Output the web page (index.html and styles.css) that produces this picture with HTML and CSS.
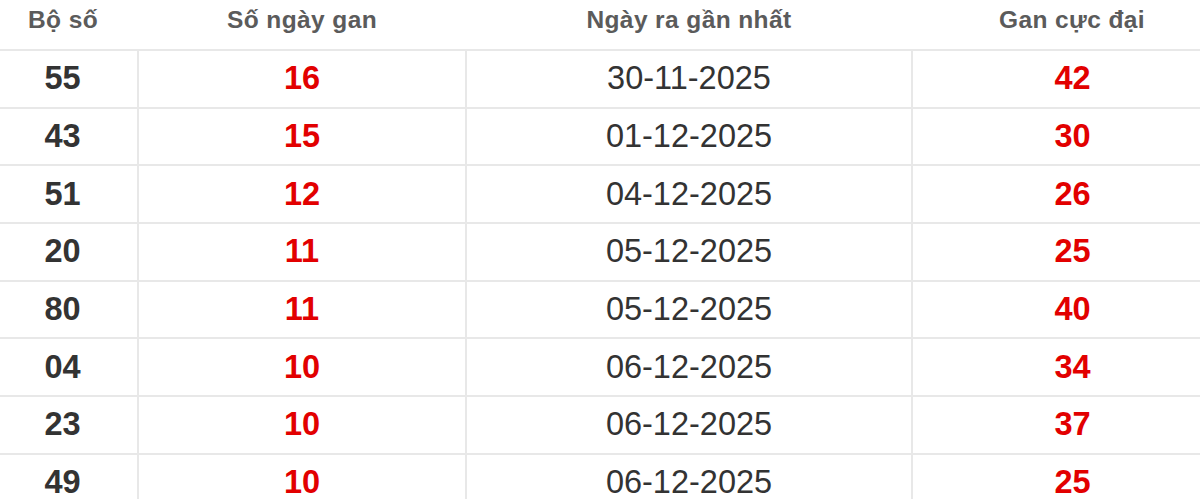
FILE: index.html
```html
<!DOCTYPE html>
<html lang="vi">
<head>
<meta charset="utf-8">
<link rel="stylesheet" href="styles.css">
</head>
<body>
<div class="wrap">
<table class="gan">
  <colgroup>
    <col class="c1"><col class="c2"><col class="c3"><col class="c4">
  </colgroup>
  <thead>
    <tr><th>Bộ số</th><th>Số ngày gan</th><th>Ngày ra gần nhất</th><th>Gan cực đại</th></tr>
  </thead>
  <tbody>
    <tr><td class="num">55</td><td class="red">16</td><td class="date">30-11-2025</td><td class="red">42</td></tr>
    <tr><td class="num">43</td><td class="red">15</td><td class="date">01-12-2025</td><td class="red">30</td></tr>
    <tr><td class="num">51</td><td class="red">12</td><td class="date">04-12-2025</td><td class="red">26</td></tr>
    <tr><td class="num">20</td><td class="red">11</td><td class="date">05-12-2025</td><td class="red">25</td></tr>
    <tr><td class="num">80</td><td class="red">11</td><td class="date">05-12-2025</td><td class="red">40</td></tr>
    <tr><td class="num">04</td><td class="red">10</td><td class="date">06-12-2025</td><td class="red">34</td></tr>
    <tr><td class="num">23</td><td class="red">10</td><td class="date">06-12-2025</td><td class="red">37</td></tr>
    <tr><td class="num">49</td><td class="red">10</td><td class="date">06-12-2025</td><td class="red">25</td></tr>
  </tbody>
</table>
</div>
</body>
</html>
```
FILE: styles.css
```css
html, body {
  margin: 0;
  padding: 0;
  background: #fff;
}
body {
  font-family: "Liberation Sans", Arial, sans-serif;
  overflow: hidden;
  height: 499px;
}
.wrap {
  width: 1200px;
  overflow: hidden;
}
.gan {
  margin-left: -12px;
  width: 1244px;
  border-collapse: collapse;
  table-layout: fixed;
}
.c1 { width: 150px; }
.c2 { width: 328px; }
.c3 { width: 446px; }
.c4 { width: 320px; }
.gan th {
  height: 50px;
  padding: 0 0 10px;
  box-sizing: border-box;
  font-size: 24.5px;
  letter-spacing: 0.4px;
  font-weight: bold;
  color: #5b5b5b;
  text-align: center;
  vertical-align: middle;
  border-bottom: 2px solid #e8e8e8;
}
.gan td {
  height: 55.7px;
  padding: 0;
  text-align: center;
  vertical-align: middle;
  font-size: 32.5px;
  border-top: 2px solid #e8e8e8;
  border-left: 2px solid #e8e8e8;
}
.gan td:first-child { border-left: none; }
.gan td.num { font-weight: bold; color: #333; }
.gan td.red { font-weight: bold; color: #e20000; }
.gan td.date { color: #333; }
```
